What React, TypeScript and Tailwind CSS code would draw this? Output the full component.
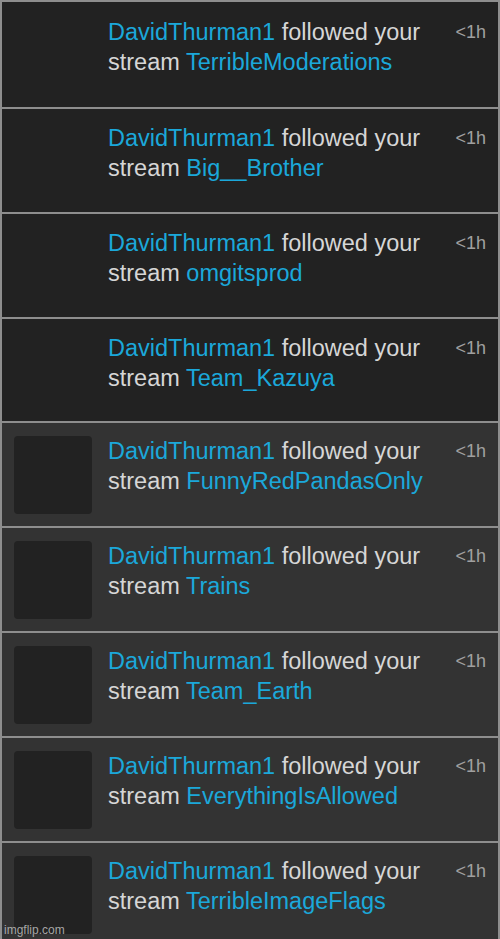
import React from "react";

const top = ["TerribleModerations", "Big__Brother", "omgitsprod", "Team_Kazuya"];
const bottom = ["FunnyRedPandasOnly", "Trains", "Team_Earth", "EverythingIsAllowed", "TerribleImageFlags"];

function Row({ stream, avatar, h, pt }: { stream: string; avatar: boolean; h: string; pt: string }) {
  return (
    <div className={`flex shrink-0 border-t-2 border-[#8e8e8e] ${avatar ? "bg-[#333333]" : "bg-[#222222]"} ${h} ${pt}`}>
      <div className="w-[106px] shrink-0 pl-[12px]">
        {avatar && <div className="h-[78px] w-[78px] rounded-[4px] bg-[#222222]" />}
      </div>
      <div className="flex-1 whitespace-nowrap text-[23.5px] leading-[30px] text-[#d6d6d6]">
        <div>
          <span className="text-[#1ba8da]">DavidThurman1</span> followed your
        </div>
        <div>
          stream <span className="text-[#1ba8da]">{stream}</span>
        </div>
      </div>
      <div className="w-[44px] shrink-0 pr-[12px] text-right text-[18px] leading-[30px] text-[#a0a0a0]">&lt;1h</div>
    </div>
  );
}

export default function App() {
  return (
    <div
      className="relative h-[939px] w-[500px] overflow-hidden border-x-2 border-[#8e8e8e] bg-[#333333]"
      style={{ fontFamily: '"Liberation Sans", Arial, sans-serif' }}
    >
      <div className="flex flex-col">
        <Row stream={top[0]} avatar={false} h="h-[107px]" pt="pt-[15px]" />
        <Row stream={top[1]} avatar={false} h="h-[105px]" pt="pt-[14px]" />
        <Row stream={top[2]} avatar={false} h="h-[105px]" pt="pt-[14px]" />
        <Row stream={top[3]} avatar={false} h="h-[104px]" pt="pt-[14px]" />
        {bottom.map((s) => (
          <Row key={s} stream={s} avatar={true} h="h-[105px]" pt="pt-[13px]" />
        ))}
      </div>
      <div className="absolute bottom-[2px] left-[2px] text-[12px] leading-[14px] text-[#c8c8c8]/80">imgflip.com</div>
    </div>
  );
}
